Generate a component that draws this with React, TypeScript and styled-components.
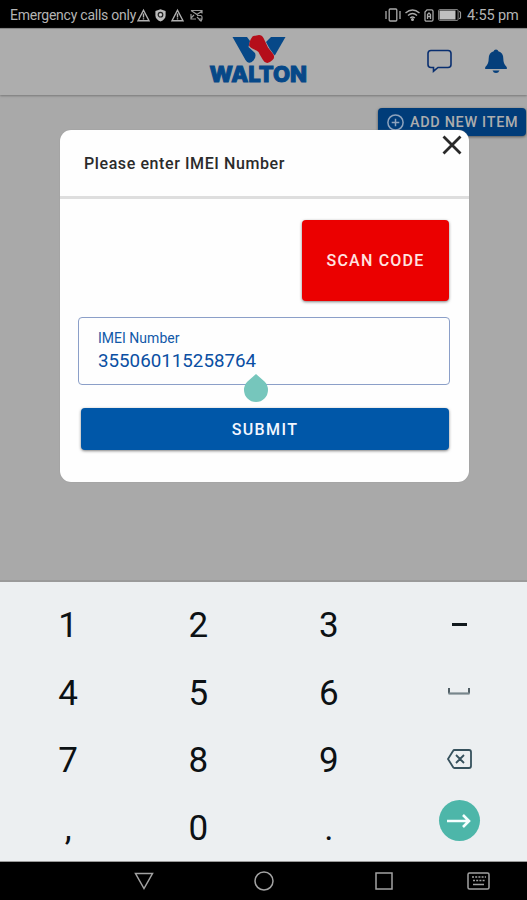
import React from "react";
import styled, { createGlobalStyle } from "styled-components";

const GlobalStyle = createGlobalStyle`
  * { box-sizing: border-box; }
  body { margin: 0; background: #000; font-family: Roboto, "Liberation Sans", sans-serif; }
  svg { display: block; flex: none; overflow: visible; }
`;

const Screen = styled.main`
  position: relative;
  display: flex;
  flex-direction: column;
  width: 527px;
  height: 900px;
  overflow: hidden;
  background: #a9a9a9;
`;

const StatusBar = styled.header`
  display: flex;
  align-items: center;
  height: 28px;
  padding: 2px 9px 0 10px;
  background: #000;
  color: #b4b4b4;
`;

const Carrier = styled.span`
  width: 127px;
  font-size: 14px;
  letter-spacing: -0.24px;
  white-space: nowrap;
`;

const StatusIcons = styled.div<{ $gap: number }>`
  display: flex;
  align-items: center;
  gap: ${(p) => p.$gap}px;
`;

const Clock = styled.span`
  margin-left: 6px;
  width: 51px;
  font-size: 14.5px;
  letter-spacing: -0.1px;
  white-space: nowrap;
`;

const Spacer = styled.div`
  flex: 1;
`;

const AppBar = styled.div`
  display: grid;
  grid-template-columns: 210px 97px 1fr;
  height: 67px;
  background: #adadad;
  border-top: 1px solid #858585;
  box-shadow: 0 1px 2px #777;
`;

const Brand = styled.div`
  grid-column: 2;
  padding-top: 7px;
`;

const Actions = styled.nav`
  display: flex;
  justify-content: flex-end;
  gap: 32px;
  padding: 19px 19px 0 0;
`;

const Content = styled.section`
  display: flex;
  justify-content: flex-end;
  align-items: flex-start;
  height: 487px;
  padding: 13px 1px 0 0;
  border-bottom: 2px solid #9a9a9a;
`;

const AddButton = styled.button`
  display: flex;
  align-items: center;
  gap: 6px;
  width: 148px;
  height: 28px;
  padding: 0 0 0 9px;
  border: 0;
  border-radius: 4px;
  background: #003c79;
  color: #adadad;
  font: 500 14.4px Roboto, sans-serif;
  letter-spacing: 0.7px;
  white-space: nowrap;
  box-shadow: 0 1px 3px #555;
`;

const Dialog = styled.section`
  position: absolute;
  top: 130px;
  left: 60px;
  width: 409px;
  height: 352px;
  border-radius: 11px;
  background: #fefefe;
  box-shadow: 0 0 1px #888;
`;

const DialogHeader = styled.div`
  display: flex;
  justify-content: space-between;
  height: 69px;
  padding: 5px 7px 0 24px;
  border-bottom: 3px solid #dedede;
`;

const DialogTitle = styled.h1`
  margin: 19px 0 0;
  color: #2b2b2b;
  font-size: 16px;
  font-weight: 500;
  line-height: 19px;
  letter-spacing: 0.59px;
  white-space: nowrap;
`;

const CloseButton = styled.button`
  width: 20px;
  height: 20px;
  padding: 0;
  border: 0;
  background: none;
`;

const DialogBody = styled.div`
  display: flex;
  flex-direction: column;
  padding: 21px 19px 0 18px;
`;

const ActionButton = styled.button<{ $tone: "scan" | "submit" }>`
  align-self: flex-end;
  width: ${(p) => (p.$tone === "scan" ? 147 : 368)}px;
  height: ${(p) => (p.$tone === "scan" ? 81 : 42)}px;
  margin-right: 1px;
  padding: 0;
  border: 0;
  border-radius: 4px;
  background: ${(p) => (p.$tone === "scan" ? "#eb0000" : "#0057a8")};
  color: ${(p) => (p.$tone === "scan" ? "#ffe4e0" : "#f2f6ff")};
  font: 500 16px Roboto, sans-serif;
  letter-spacing: ${(p) => (p.$tone === "scan" ? 1.2 : 1.4)}px;
  box-shadow: 0 1px 3px rgba(0, 0, 0, 0.5);
`;

const Field = styled.label`
  position: relative;
  display: flex;
  flex-direction: column;
  height: 68px;
  margin: 16px 0 23px;
  padding: 11px 19px 0;
  border: 1px solid #8b9fc8;
  border-radius: 4px;
  color: #1159a8;
`;

const FieldLabel = styled.span`
  font-size: 14px;
  line-height: 18px;
  letter-spacing: 0.02px;
`;

const FieldValue = styled.span`
  font-size: 18.75px;
  line-height: 29px;
  color: #0a4fa3;
`;

const CursorHandle = styled.svg`
  position: absolute;
  left: 165px;
  top: 56px;
`;

const Keyboard = styled.section`
  display: grid;
  grid-template-columns: repeat(4, 130.3px);
  grid-template-rows: repeat(4, 67.8px);
  height: 280px;
  padding: 10px 0 0 3px;
  background: #eceff1;
  border-bottom: 1px solid #999;
`;

const Key = styled.button<{ $lift?: number }>`
  display: flex;
  align-items: center;
  justify-content: center;
  padding: 0 0 ${(p) => p.$lift ?? 0}px;
  border: 0;
  background: none;
  color: #0c1114;
  font: 400 35px/40px Roboto, sans-serif;
`;

const EnterCircle = styled.span`
  display: flex;
  align-items: center;
  justify-content: center;
  width: 41px;
  height: 41px;
  border-radius: 50%;
  background: #4db6a9;
`;

const NavBar = styled.footer`
  display: grid;
  grid-template-columns: 119px 120px 120px 70px;
  align-items: center;
  justify-items: center;
  height: 38px;
  padding-left: 84.5px;
  background: #000;
`;

const Warning = () => (
  <svg width="13" height="13" viewBox="0 0 13 13" fill="none" stroke="#b0b0b0" strokeWidth="1.4">
    <path d="M6.5 1.2 12 11.7H1zM6.5 4.5v4M6.5 9.3v1.2" />
  </svg>
);

const Shield = () => (
  <svg width="11" height="13" viewBox="0 0 11 13">
    <path d="M5.5.3 10.6 2v4.5c0 2.8-2 4.8-5.1 6.1C2.4 11.3.4 9.3.4 6.5V2z" fill="#bcbcbc" />
    <circle cx="5.5" cy="5.7" r="2.3" fill="none" stroke="#222" strokeWidth="1.2" />
    <circle cx="5.5" cy="5.7" r=".8" fill="#ddd" />
  </svg>
);

const MessageAlert = () => (
  <svg width="13" height="13" viewBox="0 0 13 13" fill="none" stroke="#999" strokeWidth="1.2">
    <path d="M1 1.5h11v3M1 1.5l6 4 5-3.5M1 5v5h5M1 9l3-3M7 6.5h3.5q1.5 0 1.5 1.5v2H9l-2-2M9 10.5l2 1.5 1-2" />
  </svg>
);

const WaltonLogo = () => (
  <svg width="97" height="48" viewBox="0 0 97 48">
    <path d="M22.5 1H37l3 4-1.5 6 6.5 6q1.5 4-1.5 7.5-2.5 2.5-4.500 2.2-2-.2-3.500-2.700z" fill="#064888" />
    <path d="M61 1h14.5L64.8 19.5q-1-1-5.300-7L56 6z" fill="#064888" />
    <path d="M39.5 6.5Q41.5.5 43.5 0l5.500-1q3 0 4.500 3L58 11.5l5.500 7q1.500 3.500-1 5.500-3.500 3.500-6 2.800-2-.3-3.500-2.800L50 19q-1-3.500-4-4.800-6.500-2.500-7-4.700z" fill="#b50e1a" />
    <text x="-0.5" y="46" textLength="97.5" lengthAdjust="spacingAndGlyphs" fontFamily="Inter, sans-serif" fontWeight="800" fontSize="21" fill="#064888" stroke="#064888" strokeWidth="1">WALTON</text>
  </svg>
);

const digits = ["1", "2", "3", "4", "5", "6", "7", "8", "9"];

const SideKey = ({ row }: { row: number }) => {
  if (row === 0)
    return (
      <Key aria-label="Minus" $lift={3}>
        <svg width="15" height="3"><path d="M0 1.5h15" stroke="#11191d" strokeWidth="3" /></svg>
      </Key>
    );
  if (row === 1)
    return (
      <Key aria-label="Space" $lift={5}>
        <svg width="22" height="7" viewBox="0 0 22 7" fill="none">
          <path d="M1 0v5.5M21 0v5.5" stroke="#37474f" strokeWidth="1.7" />
          <path d="M.5 5.5h21" stroke="#78868c" strokeWidth="2.2" />
        </svg>
      </Key>
    );
  return (
    <Key aria-label="Backspace" $lift={5}>
      <svg width="25" height="20" viewBox="0 0 25 20" fill="none" stroke="#36515d" strokeWidth="1.8">
        <path d="M7.5 1H22q2 0 2 2v14q0 2-2 2H7.5Q6.5 19 6 18L1 10l5-8q.5-1 1.5-1zM9 6l8 8M17 6l-8 8" />
      </svg>
    </Key>
  );
};

export default function App() {
  return (
    <>
      <GlobalStyle />
      <Screen>
        <StatusBar>
          <Carrier>Emergency calls only</Carrier>
          <StatusIcons $gap={5.2}>
            <Warning />
            <Shield />
            <Warning />
            <MessageAlert />
          </StatusIcons>
          <Spacer />
          <StatusIcons $gap={4}>
            <svg width="16" height="14" viewBox="0 0 16 14" fill="none" stroke="#aaa" strokeWidth="1.3">
              <rect x="4.2" y="1" width="7.6" height="12" rx="1" />
              <path d="M1 3v8M15 3v8" />
            </svg>
            <svg width="15" height="12" viewBox="0 0 15 12" fill="none" stroke="#aaa" strokeWidth="1.4">
              <path d="M.5 4Q7.5-2 14.5 4M3 6.5q4.5-4 9 0M5.2 9q2.3-2 4.6 0" />
              <circle cx="7.5" cy="10.5" r=".8" fill="#aaa" />
            </svg>
            <svg width="10" height="13" viewBox="0 0 10 13" fill="none" stroke="#aaa" strokeWidth="1.3">
              <path d="M3 .8h4.5q1.5 0 1.5 1.5v8.400q0 1.500-1.500 1.500h-5Q1 12.200 1 10.700V3zM3.500 10V5.500L5 4l1.500 1.500V10M3.500 7.500h3" />
            </svg>
            <svg width="23" height="12" viewBox="0 0 23 12">
              <rect x="0.6" y="0.6" width="19.5" height="10.8" rx="1" fill="none" stroke="#888" />
              <rect x="1.5" y="1.5" width="16" height="9" fill="#c0c0c0" />
              <path d="M21 2.5q1.5 0 1.5 1v5q0 1-1.5 1" fill="none" stroke="#999" strokeWidth="1.2" />
            </svg>
          </StatusIcons>
          <Clock>4:55 pm</Clock>
        </StatusBar>

        <AppBar>
          <Brand><WaltonLogo /></Brand>
          <Actions>
            <svg width="26" height="26" viewBox="0 0 26 26" fill="none" stroke="#092f70" strokeWidth="1.6">
              <path d="M5 2.5h17q3 0 3 3v11q0 3-3 3H12l-4.5 3.7v-3.7H5q-3 0-3-3v-11q0-3 3-3z" />
            </svg>
            <svg width="24" height="26" viewBox="0 0 24 26" fill="#053f7b">
              <path d="M12 1.5q2 0 2.3 1.7 5 1.5 5 7.3 0 5.5 3 8 1 1 .5 2.500H1.200q-.5-1.500.5-2.500 3-2.500 3-8 0-5.800 5-7.300Q10 1.500 12 1.500zM8.500 22.500h7q-1 2.500-3.500 2.500t-3.500-2.500z" />
            </svg>
          </Actions>
        </AppBar>

        <Content>
          <AddButton>
            <svg width="17" height="17" viewBox="0 0 17 17" fill="none" stroke="#8ea3bd" strokeWidth="1.5">
              <circle cx="8.5" cy="8.5" r="7.6" />
              <path d="M8.5 4.7v7.6M4.7 8.5h7.6" />
            </svg>
            ADD NEW ITEM
          </AddButton>
        </Content>

        <Keyboard>
          {[0, 1, 2].map((row) => (
            <React.Fragment key={row}>
              {digits.slice(row * 3, row * 3 + 3).map((d) => (
                <Key key={d}>{d}</Key>
              ))}
              <SideKey row={row} />
            </React.Fragment>
          ))}
          <Key>,</Key>
          <Key>0</Key>
          <Key>.</Key>
          <Key aria-label="Next" $lift={17}>
            <EnterCircle>
              <svg width="24" height="14" viewBox="0 0 24 14" fill="none" stroke="#f6ffff" strokeWidth="2.6">
                <path d="M0 7h22M16 1l6 6-6 6" />
              </svg>
            </EnterCircle>
          </Key>
        </Keyboard>

        <NavBar>
          <svg width="20" height="18" viewBox="0 0 20 18" fill="none" stroke="#a2a2a2" strokeWidth="1.5">
            <path d="M1.5 1.5h17L10 16.5z" />
          </svg>
          <svg width="20" height="20" viewBox="0 0 20 20" fill="none" stroke="#a2a2a2" strokeWidth="1.5">
            <circle cx="10" cy="10" r="9" />
          </svg>
          <svg width="18" height="18" viewBox="0 0 18 18" fill="none" stroke="#a2a2a2" strokeWidth="1.5">
            <rect x="1" y="1" width="16" height="16" />
          </svg>
          <svg width="23" height="18" viewBox="0 0 23 18" fill="none" stroke="#a2a2a2" strokeWidth="1.5">
            <rect x="1" y="1" width="21" height="16" rx="1.5" />
            <path d="M5 5h14M6 8.5h12" strokeDasharray="2 1.2" />
            <path d="M6 12.5h11" />
          </svg>
        </NavBar>

        <Dialog role="dialog">
          <DialogHeader>
            <DialogTitle>Please enter IMEI Number</DialogTitle>
            <CloseButton aria-label="Close">
              <svg width="20" height="20" viewBox="0 0 20 20" stroke="#292929" strokeWidth="2.8">
                <path d="M1.5 1.5l17 17M18.5 1.5l-17 17" />
              </svg>
            </CloseButton>
          </DialogHeader>
          <DialogBody>
            <ActionButton $tone="scan">SCAN CODE</ActionButton>
            <Field>
              <FieldLabel>IMEI Number</FieldLabel>
              <FieldValue>355060115258764</FieldValue>
              <CursorHandle width="24" height="28" viewBox="0 0 24 28">
                <path d="M12 0l8.5 7.5a12 12 0 1 1-17 0z" fill="#76c6bc" />
              </CursorHandle>
            </Field>
            <ActionButton $tone="submit">SUBMIT</ActionButton>
          </DialogBody>
        </Dialog>
      </Screen>
    </>
  );
}
